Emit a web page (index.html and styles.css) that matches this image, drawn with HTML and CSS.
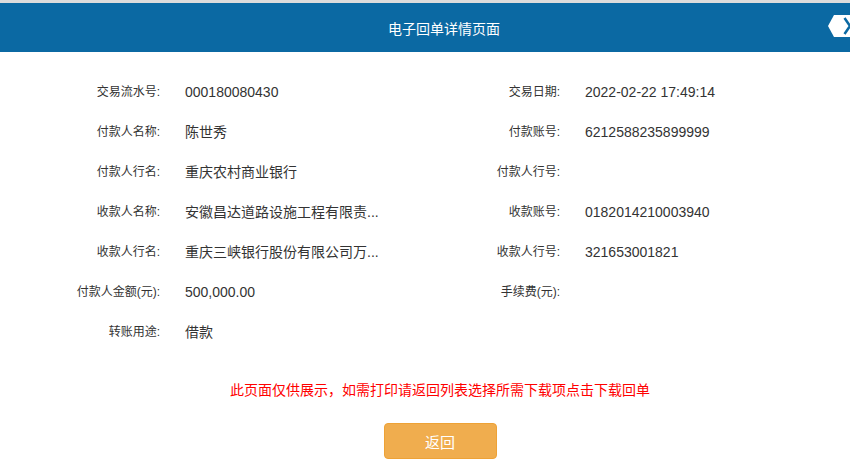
FILE: index.html
```html
<!DOCTYPE html>
<html lang="zh-CN">
<head>
    <meta charset="UTF-8">
    <title>电子回单详情页面</title>
    <link rel="stylesheet" href="styles.css">
</head>
<body>
<div class="page">
    <header class="top-bar">
        <h1>电子回单详情页面</h1>
        <span class="side-tab">
            <svg width="52" height="22" viewBox="0 0 52 22">
                <polygon points="0,11 6,0 52,0 52,22 6,22" fill="#fff"/>
                <polyline points="16.5,3 22,11 16.5,19" fill="none" stroke="#0b69a3" stroke-width="2.5"/>
            </svg>
        </span>
    </header>

    <!-- 回单明细 -->
    <div class="detail-grid">
        <div class="label">交易流水号:</div>
        <div class="value">000180080430</div>
        <div class="label">交易日期:</div>
        <div class="value">2022-02-22 17:49:14</div>

        <div class="label">付款人名称:</div>
        <div class="value">陈世秀</div>
        <div class="label">付款账号:</div>
        <div class="value">6212588235899999</div>

        <div class="label">付款人行名:</div>
        <div class="value">重庆农村商业银行</div>
        <div class="label">付款人行号:</div>
        <div class="value"></div>

        <div class="label">收款人名称:</div>
        <div class="value">安徽昌达道路设施工程有限责...</div>
        <div class="label">收款账号:</div>
        <div class="value">0182014210003940</div>

        <div class="label">收款人行名:</div>
        <div class="value">重庆三峡银行股份有限公司万...</div>
        <div class="label">收款人行号:</div>
        <div class="value">321653001821</div>

        <div class="label">付款人金额(元):</div>
        <div class="value">500,000.00</div>
        <div class="label">手续费(元):</div>
        <div class="value"></div>

        <div class="label">转账用途:</div>
        <div class="value">借款</div>
        <div class="label"></div>
        <div class="value"></div>
    </div>

    <p class="notice">此页面仅供展示，如需打印请返回列表选择所需下载项点击下载回单</p>

    <div class="actions">
        <button class="btn-back">返回</button>
    </div>
</div>
</body>
</html>
```

FILE: styles.css
```css
html, body {
    margin: 0;
    padding: 0;
    background-color: #fff;
    overflow: hidden;
}
body {
    font-family: "Liberation Sans", "Noto Sans CJK SC", sans-serif;
    color: #333;
}
.page {
    width: 880px;
}
.top-bar {
    position: relative;
    border-top: 3px solid #dcdcdc;
    background-color: #0b69a3;
    height: 49px;
    display: flex;
    align-items: center;
    justify-content: center;
}
.top-bar h1 {
    margin: 0;
    font-size: 14px;
    font-weight: normal;
    color: #fff;
    padding-left: 8px;
}
.side-tab {
    position: absolute;
    right: 0;
    top: 12px;
    height: 22px;
}
.side-tab svg {
    display: block;
}
.detail-grid {
    display: grid;
    grid-template-columns: 160px 240px 160px 1fr;
    grid-auto-rows: 40px;
    padding-top: 20px;
}
.label {
    font-size: 12px;
    text-align: right;
    line-height: 40px;
    color: #333;
}
.value {
    font-size: 14px;
    line-height: 40px;
    padding-left: 25px;
    white-space: nowrap;
    color: #333;
}
.notice {
    margin: 28px 0 0;
    text-align: center;
    font-size: 14px;
    line-height: 20px;
    color: #f00;
}
.actions {
    display: flex;
    justify-content: center;
    margin-top: 23px;
}
.btn-back {
    width: 113px;
    height: 36px;
    background-color: #f0ad4e;
    border: 1px solid #eea236;
    border-radius: 4px;
    color: #fff;
    font-family: "Liberation Sans", "Noto Sans CJK SC", sans-serif;
    font-size: 15px;
    padding: 0;
}
```
